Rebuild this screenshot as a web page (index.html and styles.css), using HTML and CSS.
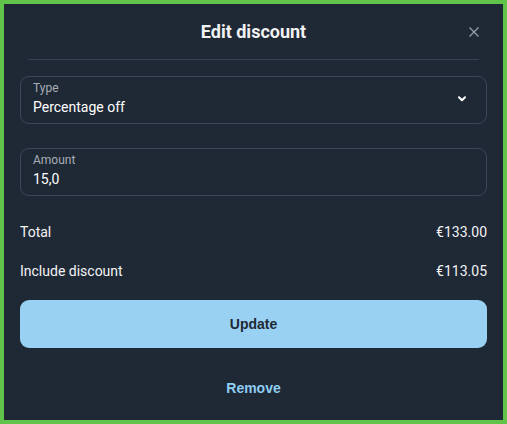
FILE: index.html
```html
<!DOCTYPE html>
<html>
<head>
<meta charset="utf-8">
<link rel="stylesheet" href="styles.css">
</head>
<body>
<div class="modal">
  <header class="header">
    <h1 class="title">Edit discount</h1>
    <button class="close" aria-label="Close">
      <svg width="10" height="10" viewBox="0 0 10 10"><path d="M0.5 0.5L9.5 9.5M9.5 0.5L0.5 9.5" stroke="#9aa1ab" stroke-width="1.2" fill="none"/></svg>
    </button>
  </header>
  <div class="divider"></div>
  <div class="field select">
    <div class="field-text">
      <span class="label">Type</span>
      <span class="value">Percentage off</span>
    </div>
    <svg class="chevron" width="8" height="6" viewBox="0 0 8 6"><path d="M1 1.2L4 4.2L7 1.2" stroke="#ffffff" stroke-width="2" fill="none" stroke-linecap="round" stroke-linejoin="round"/></svg>
  </div>
  <div class="field amount">
    <div class="field-text">
      <span class="label">Amount</span>
      <span class="value">15,0</span>
    </div>
  </div>
  <div class="summary">
    <div class="row"><span>Total</span><span>€133.00</span></div>
    <div class="row"><span>Include discount</span><span>€113.05</span></div>
  </div>
  <button class="update">Update</button>
  <button class="remove">Remove</button>
</div>
</body>
</html>
```
FILE: styles.css
```css
html, body {
  margin: 0;
  padding: 0;
}
body {
  width: 507px;
  height: 424px;
  box-sizing: border-box;
  border: 4px solid #5fc449;
  background: #1f2835;
  font-family: Roboto, "Noto Sans", sans-serif;
  color: #f3f4f6;
  overflow: hidden;
}
.modal {
  padding: 0 16px;
  display: flex;
  flex-direction: column;
}
.header {
  position: relative;
  display: flex;
  justify-content: center;
  padding: 16px 0 15px;
}
.title {
  margin: 0;
  font-size: 18px;
  line-height: 24px;
  font-weight: 700;
  color: #f1f2f4;
}
.close {
  position: absolute;
  right: 8px;
  top: 23px;
  background: none;
  border: 0;
  padding: 0;
  width: 10px;
  height: 10px;
  display: flex;
}
.divider {
  height: 1px;
  background: #364253;
  margin: 0 8px;
}
.field {
  border: 1px solid #3a4759;
  border-radius: 9px;
  padding: 3px 12px 4px;
  display: flex;
  align-items: center;
  justify-content: space-between;
}
.select {
  margin-top: 16px;
}
.amount {
  margin-top: 24px;
}
.field-text {
  display: flex;
  flex-direction: column;
}
.label {
  font-size: 12px;
  line-height: 16px;
  color: #a7adb7;
}
.value {
  font-size: 14px;
  line-height: 23px;
  color: #ffffff;
}
.chevron {
  margin-right: 8px;
  margin-top: -2px;
}
.summary {
  margin-top: 16px;
}
.row {
  display: flex;
  justify-content: space-between;
  font-size: 14px;
  line-height: 19px;
  padding: 11px 0 9px;
  color: #f3f4f6;
}
.update {
  margin-top: 10px;
  height: 48px;
  border: 0;
  border-radius: 9px;
  background: #99d1f2;
  color: #1f2937;
  font-family: "Liberation Sans", Arial, sans-serif;
  font-weight: 700;
  font-size: 14px;
}
.remove {
  margin-top: 16px;
  height: 48px;
  border: 0;
  background: none;
  color: #8fcdf2;
  font-family: "Liberation Sans", Arial, sans-serif;
  font-weight: 700;
  font-size: 14px;
}
```
